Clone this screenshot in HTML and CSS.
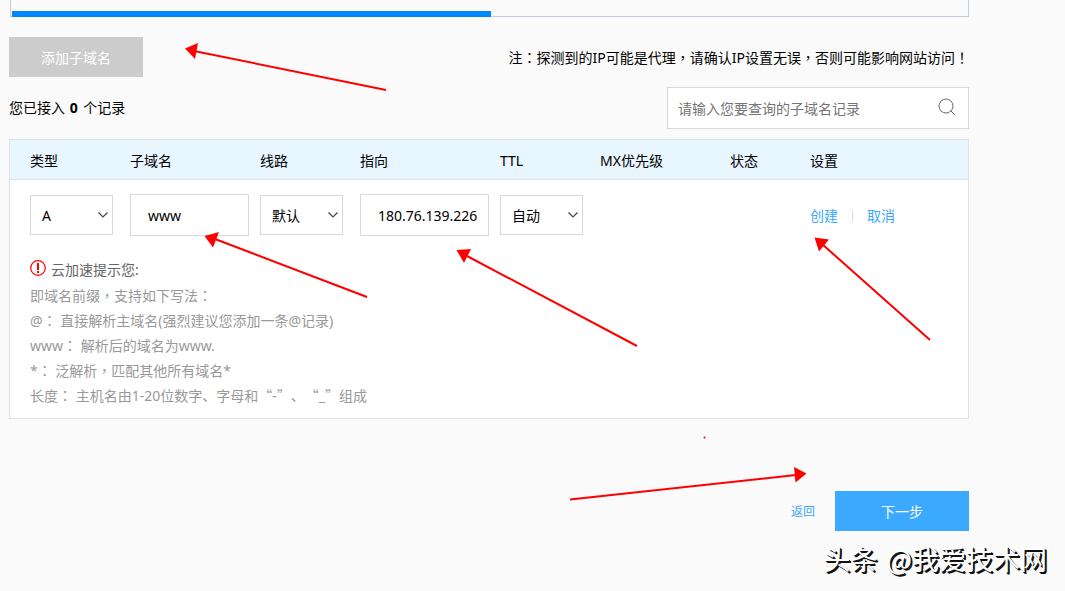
FILE: index.html
```html
<!DOCTYPE html>
<html lang="zh-CN">
<head>
<meta charset="utf-8">
<title>添加子域名</title>
<link rel="stylesheet" href="styles.css">
</head>
<body>
<main class="page">
  <div class="panel"><div class="panel-progress"></div></div>

  <div class="toolbar">
    <button class="btn btn-muted" type="button">添加子域名</button>
    <p class="note">注<span class="mid" lang="zh-TW">：</span>探测到的IP可能是代理<span class="mid" lang="zh-TW">，</span>请确认IP设置无误<span class="mid" lang="zh-TW">，</span>否则可能影响网站访问<span class="mid" lang="zh-TW">！</span></p>
  </div>

  <div class="summary">
    <p class="count">您已接入 <b>0</b> 个记录</p>
    <form class="search">
      <input class="search-input" type="text" aria-label="查询子域名记录" placeholder="请输入您要查询的子域名记录">
      <button class="search-btn" type="button" aria-label="搜索">
        <svg width="20" height="20" viewBox="0 0 20 20" fill="none" stroke="#666"><circle cx="8" cy="8" r="7"/><path d="M13 13l4 4"/></svg>
      </button>
    </form>
  </div>

  <section class="card">
    <table class="records">
      <colgroup><col class="w100"><col class="w130"><col class="w100"><col class="w140"><col class="w100"><col class="w130"><col class="w80"><col></colgroup>
      <thead>
        <tr><th>类型</th><th>子域名</th><th>线路</th><th>指向</th><th>TTL</th><th>MX优先级</th><th>状态</th><th>设置</th></tr>
      </thead>
      <tbody>
        <tr>
          <td><select class="field select" aria-label="类型"><option>A</option></select></td>
          <td><input class="field text name" type="text" aria-label="子域名" value="www"></td>
          <td><select class="field select" aria-label="线路"><option>默认</option></select></td>
          <td><input class="field text target" type="text" aria-label="指向" value="180.76.139.226"></td>
          <td><select class="field select" aria-label="TTL"><option>自动</option></select></td>
          <td></td>
          <td></td>
          <td><div class="actions"><a href="#">创建</a><i class="divider"></i><a href="#">取消</a></div></td>
        </tr>
      </tbody>
    </table>
    <div class="tips">
      <p class="tips-title">
        <svg width="16" height="16" viewBox="0 0 16 16"><circle cx="8" cy="8" r="7.3" fill="none" stroke="#f00" stroke-width="1.2"/><path d="M7 3h2v7H7zM7 11h2v2H7z" fill="#f00"/></svg>
        <span>云加速提示您:</span>
      </p>
      <p>即域名前缀<span class="mid" lang="zh-TW">，</span>支持如下写法<span class="mid" lang="zh-TW">：</span></p>
      <p>@<span class="mid" lang="zh-TW">：</span> 直接解析主域名(强烈建议您添加一条@记录)</p>
      <p>www<span class="mid" lang="zh-TW">：</span> 解析后的域名为www.</p>
      <p>*<span class="mid" lang="zh-TW">：</span> 泛解析<span class="mid" lang="zh-TW">，</span>匹配其他所有域名*</p>
      <p>长度<span class="mid" lang="zh-TW">：</span> 主机名由1-20位数字、字母和<span class="wide">“</span>-<span class="wide">”、“</span>_<span class="wide">”</span>组成</p>
    </div>
  </section>

  <div class="footer">
    <a class="back" href="#">返回</a>
    <button class="btn btn-primary" type="button">下一步</button>
  </div>
</main>

<svg class="arrows" width="1065" height="591" viewBox="0 0 1065 591" aria-hidden="true">
  <g stroke="#f00" stroke-width="2">
    <path d="M386 90L194 51M367 297L215 239M637 346L467 256M930 340L822 244M570 499.500L796 475"/>
  </g>
  <g fill="#f00">
    <path d="M185 48.500L198 43L195 59z"/>
    <path d="M204.500 236L219 232L213 247.500z"/>
    <path d="M456.500 250L471 249L464 263z"/>
    <path d="M814.500 237.500L829 239.500L819 251.500z"/>
    <path d="M806.500 473.500L794 467L795.500 482.500z"/>
    <circle cx="704.500" cy="437.500" r="1"/>
  </g>
</svg>
<div class="watermark"><span>头条</span><span>@我爱技术网</span></div>
</body>
</html>
```

FILE: styles.css
```css
* { box-sizing: border-box; }

body {
  position: relative;
  margin: 0;
  min-height: 100vh;
  background: #fafafa;
  color: #000;
  font: 14px/20px "Noto Sans", "Noto Sans CJK SC", sans-serif;
}

p { margin: 0; }
a { color: #3ba9ff; text-decoration: none; }
button, input, select { font: inherit; color: inherit; }

.mid { font-family: "Noto Sans CJK TC", sans-serif; }
.wide { font-family: "Noto Sans CJK SC", sans-serif; text-spacing-trim: space-all; }

.page { margin: 0 96px 0 9px; }

.panel {
  display: flex;
  align-items: flex-end;
  height: 17px;
  margin-left: 1px;
  border: 1px solid #c0ccda;
  border-top: 0;
}
.panel-progress {
  width: 50%;
  height: 6px;
  margin: 0 0 -1px 1px;
  background: #0088ff;
}

.toolbar, .summary {
  display: flex;
  align-items: center;
  justify-content: space-between;
}
.toolbar { margin-top: 20px; }
.summary { margin-top: 10px; }
.count b { margin: 0 2px 0 1px; }

.btn {
  width: 134px;
  height: 40px;
  padding: 2px 0 0;
  border: 0;
  color: #fff;
}
.btn-muted { background: #ccc; }
.btn-primary { background: #3ba9ff; }

.search {
  display: flex;
  align-items: center;
  width: 302px;
  height: 42px;
  padding: 0 10px;
  border: 1px solid #d9d9d9;
  background: #fff;
}
.search-input {
  flex: 1;
  min-width: 0;
  padding: 2px 0 0;
  border: 0;
  outline: 0;
  background: none;
}
.search-input::placeholder { color: #757575; }
.search-btn {
  display: flex;
  padding: 0;
  border: 0;
  background: none;
}

.card {
  margin-top: 10px;
  border: 1px solid #e2e2e2;
  background: #fff;
}
.records {
  width: 100%;
  table-layout: fixed;
  border-spacing: 0;
}
.w80 { width: 80px; }
.w100 { width: 100px; }
.w130 { width: 130px; }
.w140 { width: 140px; }
.records th {
  height: 40px;
  padding: 2px 0 0 20px;
  border-bottom: 1px solid #e2e2e2;
  background: #e8f6ff;
  font-weight: 400;
  text-align: left;
  white-space: nowrap;
}
.records td {
  padding: 14px 0 0 20px;
  vertical-align: middle;
}

.field {
  display: block;
  border: 1px solid #d9d9d9;
  border-radius: 0;
  background: #fff;
}
.select {
  width: 83px;
  height: 40px;
  padding: 2px 11px 0;
  appearance: none;
  background: #fff url("data:image/svg+xml,%3Csvg xmlns='http://www.w3.org/2000/svg' width='10' height='6' fill='none' stroke='%23444' stroke-width='1.2'%3E%3Cpath d='M.5.5L5 5 9.500.5'/%3E%3C/svg%3E") no-repeat right 4px center;
}
.text {
  height: 42px;
  padding: 0 0 0 17px;
}
.name { width: 119px; }
.target { width: 129px; }

.actions { display: flex; align-items: center; gap: 14px; padding-top: 2px; }
.divider { width: 1px; height: 12px; background: #ddd; }

.tips {
  padding: 21px 20px 10px;
  color: #999;
  line-height: 25px;
}
.tips-title {
  display: flex;
  gap: 5px;
  color: #666;
  line-height: 26px;
}
.tips-title svg { margin-top: 3px; }

.footer {
  display: flex;
  align-items: center;
  justify-content: flex-end;
  gap: 20px;
  margin-top: 72px;
}
.back { padding-top: 2px; font-size: 12px; }

.arrows {
  position: absolute;
  top: 0;
  left: 0;
  pointer-events: none;
}
.watermark {
  position: absolute;
  display: flex;
  gap: 9px;
  right: 18px;
  top: 539px;
  color: #fff;
  font: 400 27px/40px "Noto Sans CJK SC", sans-serif;
  text-shadow: 1px 1px 0 #111, 2px 2px 0 #111;
  white-space: nowrap;
}
```
